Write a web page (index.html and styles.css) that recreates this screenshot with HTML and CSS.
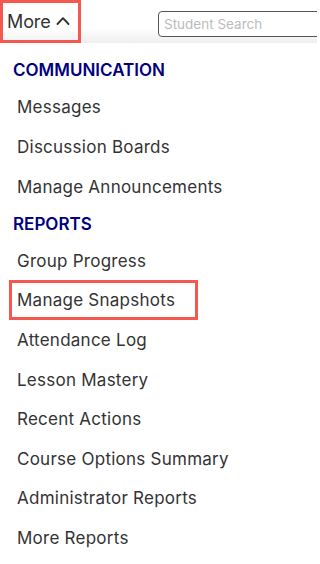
FILE: index.html
```html
<!DOCTYPE html>
<html>
<head>
<meta charset="utf-8">
<link rel="stylesheet" href="styles.css">
</head>
<body>
<header class="topbar">
  <div class="more-btn">
    <span class="more-label">More</span>
    <svg class="chev" width="14" height="10" viewBox="0 0 14 10"><path d="M1.5 8 L7 2.2 L12.5 8" fill="none" stroke="#333" stroke-width="1.9" stroke-linecap="round" stroke-linejoin="round"/></svg>
  </div>
  <div class="search"><span class="placeholder">Student Search</span></div>
</header>
<nav class="menu">
  <div class="section section-1">COMMUNICATION</div>
  <div class="item item-a">Messages</div>
  <div class="item item-a">Discussion Boards</div>
  <div class="item item-a">Manage Announcements</div>
  <div class="section section-2">REPORTS</div>
  <div class="item">Group Progress</div>
  <div class="item item-hl"><span class="hl">Manage Snapshots</span></div>
  <div class="item">Attendance Log</div>
  <div class="item">Lesson Mastery</div>
  <div class="item">Recent Actions</div>
  <div class="item">Course Options Summary</div>
  <div class="item">Administrator Reports</div>
  <div class="item">More Reports</div>
</nav>
</body>
</html>
```
FILE: styles.css
```css
html, body {
  margin: 0;
  padding: 0;
  background: #fff;
  overflow: hidden;
  width: 317px;
  height: 564px;
}
body {
  font-family: Inter, "Noto Sans", sans-serif;
  color: #333;
}
.topbar {
  height: 43px;
  display: flex;
  align-items: center;
  background: linear-gradient(to bottom, #fff 0px, #fff 28px, #eeeeee 43px);
  overflow: hidden;
}
.more-btn {
  box-sizing: border-box;
  flex: 0 0 81px;
  height: 43px;
  border: 3px solid #f4584e;
  display: flex;
  align-items: center;
  padding-left: 4px;
  gap: 5px;
  background: linear-gradient(to bottom, #fff 0px, #fff 25px, #f1f1f1 40px);
}
.more-label {
  font-size: 18px;
  color: #333;
  letter-spacing: -0.1px;
}
.chev {
  display: block;
  margin-top: -2px;
}
.search {
  box-sizing: border-box;
  margin-left: 77px;
  margin-top: 5px;
  flex: 0 0 220px;
  height: 26px;
  border: 1px solid #555;
  border-radius: 4px;
  background: #fff;
  display: flex;
  align-items: center;
  padding-left: 5px;
}
.placeholder {
  font-size: 13.5px;
  color: #bcbcbc;
}
.menu {
  display: flex;
  flex-direction: column;
  padding-top: 10px;
}
.section {
  font-size: 17px;
  font-weight: 600;
  color: #000080;
  padding-left: 13px;
  display: flex;
  align-items: center;
  height: 34px;
}
.item {
  font-size: 17px;
  letter-spacing: 0.25px;
  color: #333;
  padding-left: 17px;
  height: 39.6px;
  display: flex;
  align-items: center;
}
.item-a {
  height: 40px;
}
.item-hl {
  padding-left: 9px;
}
.hl {
  box-sizing: border-box;
  border: 3px solid #f4584e;
  height: 40px;
  width: 189px;
  padding-left: 5px;
  display: flex;
  align-items: center;
}
```
